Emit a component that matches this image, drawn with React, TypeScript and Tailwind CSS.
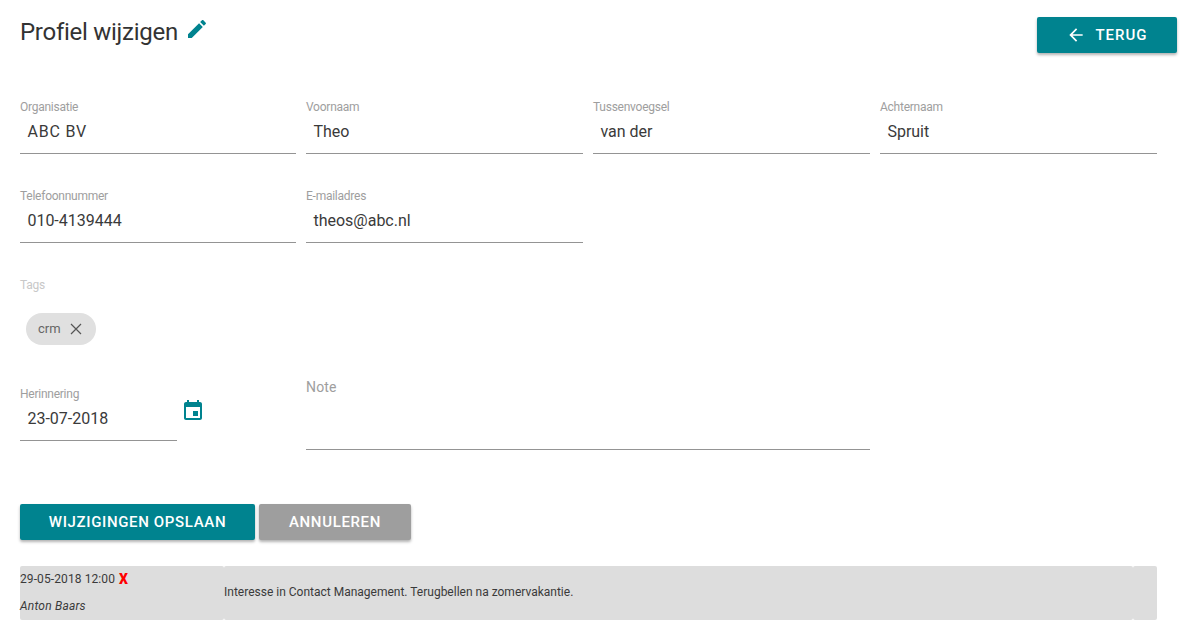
function Field({ label, value, className = "", valueClass = "" }: { label: string; value: string; className?: string; valueClass?: string }) {
  return (
    <div className={`h-[54px] border-b border-[#949494] ${className}`}>
      <div className="h-[14px] text-[12px] leading-[14px] tracking-[-0.25px] text-[#9e9e9e]">{label}</div>
      <div className={`mt-[8px] pl-[7.4px] text-[16px] leading-[19px] text-[#3a3a3a] ${valueClass}`}>{value}</div>
    </div>
  );
}

export default function App() {
  return (
    <div className="h-[633px] overflow-hidden bg-white font-['Roboto',sans-serif]">
      {/* Header */}
      <div className="flex h-[100px] items-start justify-between pl-[20px] pr-[7px]">
        <div className="flex pt-[17px]">
          <h1 className="text-[24px] leading-[31px] font-normal tracking-[-0.27px] text-[#333]">Profiel wijzigen</h1>
          <svg viewBox="0 0 24 24" className="ml-[7px] h-6 w-6 fill-[#00838f]">
            <path d="M3 17.25V21h3.75L17.81 9.94l-3.75-3.75L3 17.25zM20.71 7.04c.39-.39.39-1.02 0-1.41l-2.34-2.34c-.39-.39-1.02-.39-1.41 0l-1.83 1.83 3.75 3.75 1.83-1.83z" />
          </svg>
        </div>
        <button className="mt-[17px] flex h-[36px] w-[140px] items-center justify-center rounded-[2px] bg-[#00838f] text-[15px] font-medium tracking-[1px] text-white shadow-[0_2px_3px_rgba(0,0,0,0.3)]">
          <svg viewBox="0 0 24 24" className="mr-[9px] h-5 w-5 fill-white">
            <path d="M20 11H7.83l5.59-5.59L12 4l-8 8 8 8 1.41-1.41L7.83 13H20v-2z" />
          </svg>
          TERUG
        </button>
      </div>

      {/* Form */}
      <div className="w-[1157px] pl-[20px]">
        <div className="grid grid-cols-[276px_277px_277px_277px] gap-x-[10px] gap-y-[35px]">
          <Field label="Organisatie" value="ABC BV" valueClass="tracking-[0.8px]" />
          <Field label="Voornaam" value="Theo" />
          <Field label="Tussenvoegsel" value="van der" />
          <Field label="Achternaam" value="Spruit" />
          <Field label="Telefoonnummer" value="010-4139444" />
          <Field label="E-mailadres" value="theos@abc.nl" />
        </div>

        <div className="mt-[35px] h-[14px] text-[12px] leading-[14px] tracking-[-0.25px] text-[#c8c8c8]">Tags</div>
        <div className="mt-[21px] ml-[6px] flex h-[32px] w-[70px] items-center rounded-full bg-[#e0e0e0] pl-[12px] text-[13px] text-[#666]">
          crm
          <svg viewBox="0 0 24 24" className="ml-[9px] h-[12px] w-[12px] stroke-[#555] stroke-[2.4]" fill="none">
            <path d="M2 2l20 20M22 2L2 22" />
          </svg>
        </div>

        <div className="mt-[21px] flex">
          <div className="mt-[21px] flex">
            <Field label="Herinnering" value="23-07-2018" className="w-[157px]" />
            <svg viewBox="0 0 24 24" className="ml-[4px] mt-[12px] h-6 w-6 fill-[#00838f]">
              <path d="M17 12h-5v5h5v-5zM16 1v2H8V1H6v2H5c-1.11 0-1.99.9-1.99 2L3 19c0 1.1.89 2 2 2h14c1.1 0 2-.9 2-2V5c0-1.1-.9-2-2-2h-1V1h-2zm3 18H5V8h14v11z" />
            </svg>
          </div>
          <div className="ml-[101px] h-[84px] w-[564px] border-b border-[#949494] pt-[11px] text-[14px] leading-[20px] tracking-[0.15px] text-[#9e9e9e]">
            Note
          </div>
        </div>

        {/* Actions */}
        <div className="mt-[54px] flex gap-[4px]">
          <button className="h-[36px] w-[235px] rounded-[2px] bg-[#00838f] text-[15px] font-medium tracking-[0.65px] text-white shadow-[0_2px_3px_rgba(0,0,0,0.3)]">
            WIJZIGINGEN OPSLAAN
          </button>
          <button className="h-[36px] w-[152px] rounded-[2px] bg-[#9e9e9e] text-[15px] font-medium tracking-[0.65px] text-white shadow-[0_2px_3px_rgba(0,0,0,0.3)]">
            ANNULEREN
          </button>
        </div>

        {/* History */}
        <div className="mt-[26px] flex h-[54px] text-[12px] text-[#3a3a3a]">
          <div className="w-[204px] rounded-[2px] bg-[#dddddd]">
            <div className="flex h-[26px] items-center leading-[14px] tracking-[0.1px]">
              29-05-2018 12:00
              <span className="ml-[4px] text-[14px] font-black text-[#ff0000]">X</span>
            </div>
            <div className="mt-[7px] leading-[14px] tracking-[0.2px] italic">Anton Baars</div>
          </div>
          <div className="flex w-[909px] items-center rounded-[2px] bg-[#dddddd] pb-[2px]">
            Interesse in Contact Management. Terugbellen na zomervakantie.
          </div>
          <div className="w-[24px] rounded-[2px] bg-[#dddddd]" />
        </div>
      </div>
    </div>
  );
}
